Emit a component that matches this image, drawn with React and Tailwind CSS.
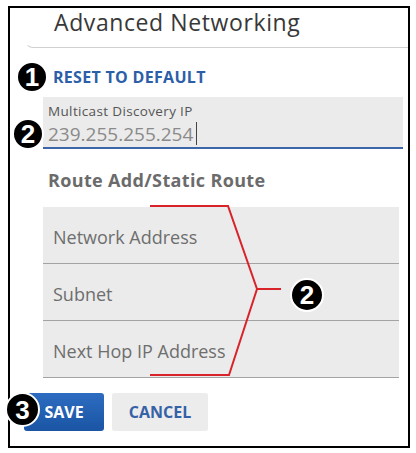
import React from 'react';

const font = { fontFamily: '"Open Sans", "Noto Sans", sans-serif' };

function Badge({ n, className }) {
    return (
        <div
            className={`absolute flex items-center justify-center rounded-full bg-black border-2 border-white text-white font-bold text-[26px] leading-none ${className}`}
            style={{ fontFamily: '"Liberation Sans", Arial, sans-serif' }}
        >
            {n}
        </div>
    );
}

function RouteRow({ label }) {
    return (
        <div className="h-[57px] border-b border-[#a3a3a3] pl-[10px] pt-[18px]">
            <span className="block text-[18px] leading-[24px] text-[#6e6e6e]">{label}</span>
        </div>
    );
}

export default function App() {
    return (
        <div className="relative w-[416px] h-[453px] bg-white overflow-hidden" style={font}>
            {/* outer frame */}
            <div className="ml-[8px] mt-[6px] w-[402px] h-[442px] border-2 border-black">
                <div className="ml-[15px] h-[40px] border-b border-l border-[#d0d0d0] border-l-transparent rounded-bl-[8px] pl-[28px]">
                    <h1 className="text-[23px] leading-[28px] tracking-[0.6px] text-[#383838]">Advanced Networking</h1>
                </div>

                <div className="mt-[19px] pl-[43px] text-[16px] leading-[20px] font-bold tracking-[0.3px] text-[#2d5ea8]">
                    RESET TO DEFAULT
                </div>

                <div className="mt-[10px] ml-[33px] w-[360px] h-[52px] bg-[#ebebeb] border-b-2 border-[#3d66aa] pl-[5px] pt-[6px]">
                    <div className="text-[13.5px] leading-[16px] tracking-[0.35px] text-[#555]">Multicast Discovery IP</div>
                    <div className="mt-[3px] flex items-center">
                        <span className="text-[19px] leading-[22px] text-[#8a8a8a]">239.255.255.254</span>
                        <span className="ml-[3px] w-px h-[23px] bg-[#444]" />
                    </div>
                </div>

                <h2 className="mt-[19px] ml-[38px] text-[18px] leading-[24px] font-bold tracking-[0.35px] text-[#6b6b6b]">
                    Route Add/Static Route
                </h2>

                <div className="mt-[15px] ml-[33px] w-[356px] bg-[#ebebeb]">
                    <RouteRow label="Network Address" />
                    <RouteRow label="Subnet" />
                    <RouteRow label="Next Hop IP Address" />
                </div>

                <div className="mt-[15px] ml-[14px] flex gap-[8px]">
                    <button className="w-[80px] h-[38px] rounded-[3px] bg-gradient-to-b from-[#2c6cc0] to-[#1b55a4] text-white text-[16px] font-bold">
                        SAVE
                    </button>
                    <button className="w-[96px] h-[38px] rounded-[2px] bg-[#ececec] text-[#3561a7] text-[16px] font-bold">
                        CANCEL
                    </button>
                </div>
            </div>

            {/* callout bracket */}
            <svg className="absolute left-0 top-0 pointer-events-none" width="416" height="453" viewBox="0 0 416 453">
                <polyline
                    points="150,206 228,206 257,289 229,375 150,375"
                    fill="none"
                    stroke="#d8232a"
                    strokeWidth="2"
                    strokeLinejoin="miter"
                />
                <line x1="257" y1="289" x2="281" y2="289" stroke="#d8232a" strokeWidth="2" />
            </svg>

            <Badge n="1" className="left-[16px] top-[61px] w-[32px] h-[32px]" />
            <Badge n="2" className="left-[12px] top-[118px] w-[32px] h-[32px]" />
            <Badge n="2" className="left-[290px] top-[278px] w-[34px] h-[34px]" />
            <Badge n="3" className="left-[5px] top-[392px] w-[35px] h-[35px]" />
        </div>
    );
}
